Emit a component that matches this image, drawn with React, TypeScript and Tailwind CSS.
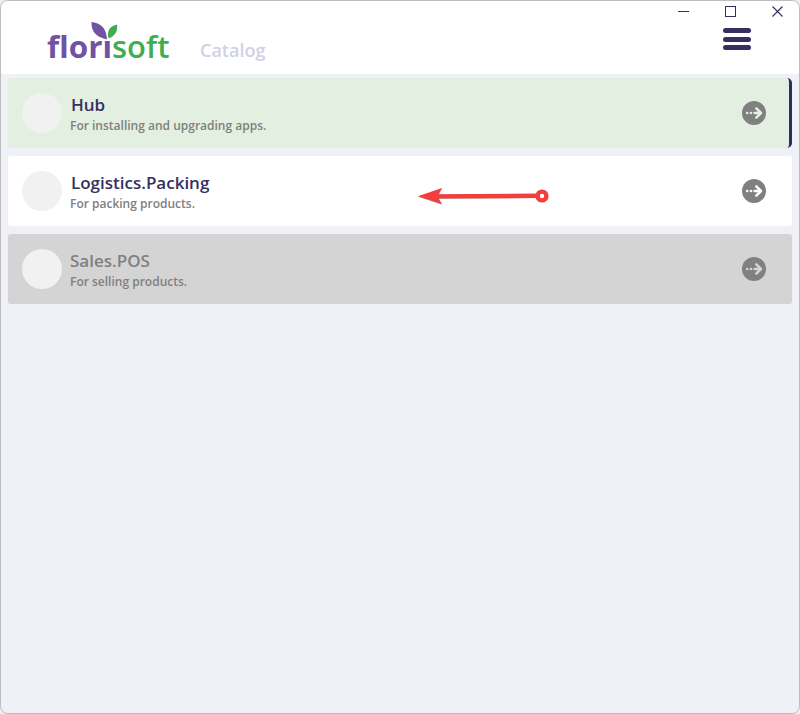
type AppEntry = {
  name: string;
  description: string;
  card: string;
  title: string;
  arrow: string;
};

const apps: AppEntry[] = [
  {
    name: "Hub",
    description: "For installing and upgrading apps.",
    card: "bg-[#e3efe1] border-r-[3px] border-[#2f2c62] rounded-r-[5px] pr-[23px]",
    title: "text-[#35305f] pl-px",
    arrow: "#e3efe1",
  },
  {
    name: "Logistics.Packing",
    description: "For packing products.",
    card: "bg-white pr-[26px]",
    title: "text-[#35305f] pl-px",
    arrow: "#ffffff",
  },
  {
    name: "Sales.POS",
    description: "For selling products.",
    card: "bg-[#d4d4d4] pr-[26px]",
    title: "text-[#808080]",
    arrow: "#d4d4d4",
  },
];

function Logo() {
  return (
    <svg width="126" height="54" viewBox="46 18 126 54" className="ml-[45px] mt-[17px] shrink-0 overflow-visible">
      <text x="47" y="57.8" fontFamily="'Open Sans', sans-serif" fontWeight="700" fontSize="30.500" fill="#7152a3" textLength="65" lengthAdjust="spacingAndGlyphs">
        florı
      </text>
      <text x="112" y="57.8" fontFamily="'Open Sans', sans-serif" fontWeight="600" fontSize="30.500" fill="#3fae50" textLength="57.500" lengthAdjust="spacingAndGlyphs">
        soft
      </text>
      <path d="M91.500 22C99 22.500 106.500 27 107 39.500C97 37.500 91 32 91.500 22Z" fill="#7152a3" />
      <path d="M117 24.500C110 26 106.500 31 108.500 38.300C115 36.500 118 31 117 24.500Z" fill="#3fae50" />
    </svg>
  );
}

function WindowControls() {
  return (
    <svg width="108" height="14" viewBox="676 5 108 14" fill="none" stroke="#35305f" className="block">
      <path d="M678 11.500H689" />
      <rect x="725.500" y="6.500" width="10" height="10" />
      <path d="M772.500 6.500L782.500 16.500M782.500 6.500L772.500 16.500" strokeWidth="1.150" />
    </svg>
  );
}

function GoIcon({ color }: { color: string }) {
  return (
    <svg width="24" height="24" viewBox="0 0 24 24" className="shrink-0">
      <circle cx="12" cy="12" r="12" fill="#808080" />
      <g fill={color}>
        <circle cx="5.200" cy="12" r="1.300" />
        <circle cx="9" cy="12" r="1.300" />
      </g>
      <path d="M12.600 12H18.300M14.300 7.300L19 12L14.300 16.700" fill="none" stroke={color} strokeWidth="2.500" strokeLinecap="round" strokeLinejoin="round" />
    </svg>
  );
}

function Pointer() {
  return (
    <svg width="134" height="20" viewBox="417 186 134 20" className="absolute left-[409px] top-[30px]">
      <path d="M418 196.700L442 188.500L439 194.500L537 193.900V198L439 198.800L442 204.800Z" fill="#777777" opacity=".7" />
      <path d="M418 196.200L442 188L438.500 194.300L537 193.500V198L438.500 198.500L442 204Z" fill="#f43d3d" />
      <circle cx="542" cy="196" r="4.400" fill="none" stroke="#f43d3d" strokeWidth="4.400" />
    </svg>
  );
}

export default function App() {
  return (
    <div className="h-[714px] w-[800px] bg-[#ededed] font-['Open_Sans',sans-serif]">
      <main className="h-full overflow-hidden rounded-[8px] border border-[#bdbdbd] bg-[#f0f1f7]">
        <header className="flex h-[73px] bg-white">
          <Logo />
          <h1 className="ml-[28px] mt-[37px] text-[18px] font-semibold leading-6 text-[#d0d0e8]">Catalog</h1>
          <div className="ml-auto mr-[15px] mt-1 flex flex-col">
            <WindowControls />
            <button aria-label="Menu" className="ml-[47px] mt-[9px] flex w-7 flex-col gap-[3.5px]">
              <span className="h-[5px] w-full rounded-full bg-[#35305f]" />
              <span className="h-[5px] w-full rounded-full bg-[#35305f]" />
              <span className="h-[5px] w-full rounded-full bg-[#35305f]" />
            </button>
          </div>
        </header>
        <section className="flex flex-col gap-2 px-[7px] pt-1">
          {apps.map((app) => (
            <article key={app.name} className={`relative flex h-[70px] items-center rounded-[3px] pl-[14px] ${app.card}`}>
              <span className="size-10 shrink-0 rounded-full bg-[#f1f1f1]" />
              <div className="ml-2 flex-1 pt-1">
                <h2 className={`text-[17px] font-semibold leading-[22px] ${app.title}`}>{app.name}</h2>
                <p className="text-[12px] font-semibold leading-5 text-[#808080]">{app.description}</p>
              </div>
              <GoIcon color={app.arrow} />
              {app.name === "Logistics.Packing" && <Pointer />}
            </article>
          ))}
        </section>
      </main>
    </div>
  );
}
